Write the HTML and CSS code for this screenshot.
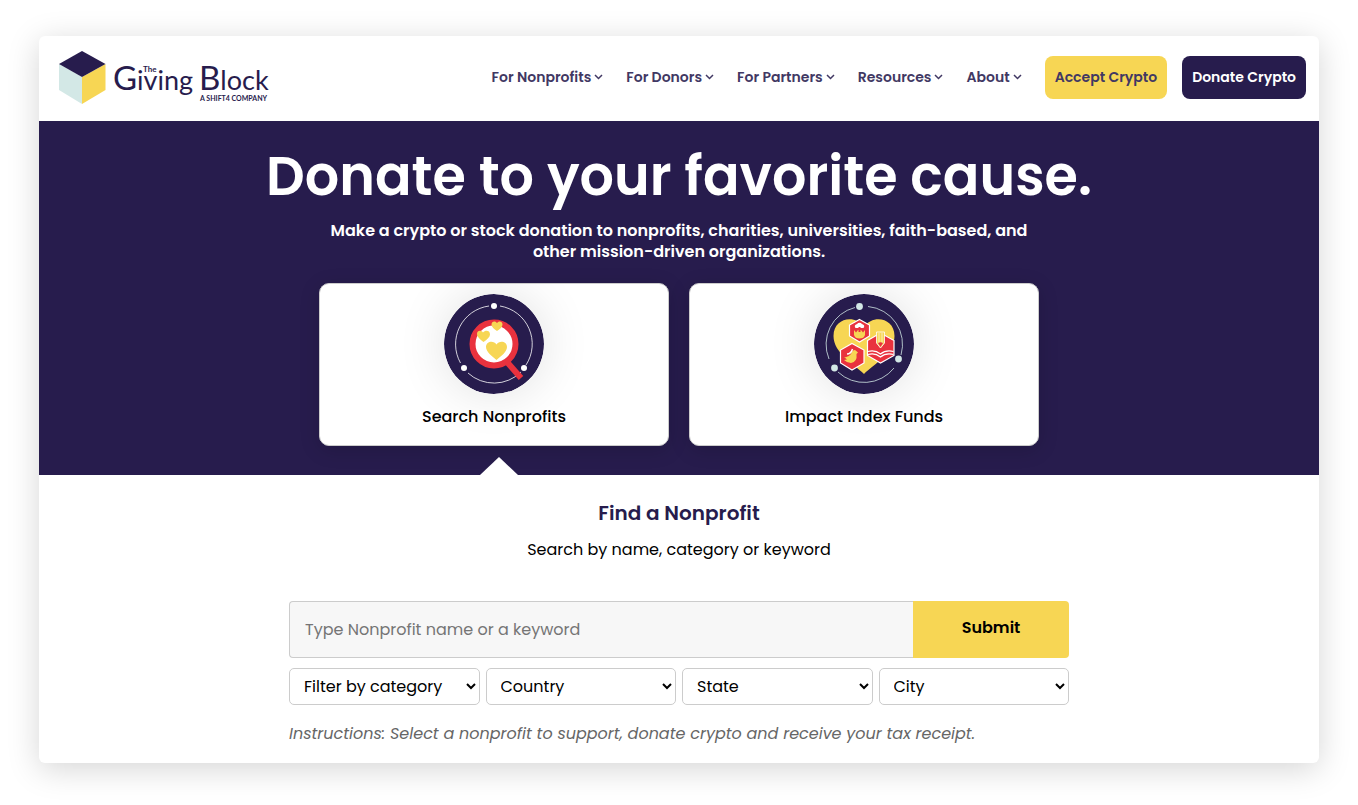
FILE: index.html
```html
<!DOCTYPE html>
<html lang="en">
<head>
    <meta charset="UTF-8">
    <meta name="viewport" content="width=device-width, initial-scale=1.0">
    <title>Donate Crypto - The Giving Block</title>
    <link rel="stylesheet" href="styles.css">
</head>
<body>

    <div class="page">
        <header class="header">
            <a class="logo" href="#" aria-label="The Giving Block">
                <svg width="220" height="56" viewBox="0 0 220 56">
                    <path d="M1 15 L24 28 V55 L1 41 Z" fill="#d3e8e6"/>
                    <path d="M47.500 15 L24 28 V55 L47.500 41 Z" fill="#f7d654"/>
                    <path d="M24 2 L47.500 15 L24 28 L1 15 Z" fill="#271c4d"/>
                    <text class="logo-name" x="55" y="41"><tspan class="logo-cap">G</tspan>iving</text>
                    <text class="logo-name" x="141" y="41"><tspan class="logo-cap">B</tspan>lock</text>
                    <text class="logo-the" x="85" y="23">The</text>
                    <text class="logo-tag" x="142" y="52">A SHIFT4 COMPANY</text>
                </svg>
            </a>
            <nav class="nav">
                <a href="#">For Nonprofits <svg class="chevron" viewBox="0 0 9 6"><path d="M1 1 L4.5 4.5 L8 1"/></svg></a>
                <a href="#">For Donors <svg class="chevron" viewBox="0 0 9 6"><path d="M1 1 L4.5 4.5 L8 1"/></svg></a>
                <a href="#">For Partners <svg class="chevron" viewBox="0 0 9 6"><path d="M1 1 L4.5 4.5 L8 1"/></svg></a>
                <a href="#">Resources <svg class="chevron" viewBox="0 0 9 6"><path d="M1 1 L4.5 4.5 L8 1"/></svg></a>
                <a href="#">About <svg class="chevron" viewBox="0 0 9 6"><path d="M1 1 L4.5 4.5 L8 1"/></svg></a>
            </nav>
            <div class="actions">
                <a class="btn btn-accept" href="#">Accept Crypto</a>
                <a class="btn btn-donate" href="#">Donate Crypto</a>
            </div>
        </header>

        <section class="hero">
            <h1>Donate to your favorite cause.</h1>
            <p class="lead">Make a crypto or stock donation to nonprofits, charities, universities, faith-based, and other mission-driven organizations.</p>
            <div class="options">
                <a class="option" href="#">
                    <svg class="option-icon" viewBox="0 0 100 100">
                        <circle cx="50" cy="50" r="50" fill="#271c4d"/>
                        <g fill="none" stroke="#fff" stroke-width="0.8">
                            <path d="M56 12 A38.5 38.5 0 0 1 82 71"/>
                            <path d="M77 78 A38.5 38.5 0 0 1 24 79"/>
                            <path d="M16.5 69 A38.5 38.5 0 0 1 45 12"/>
                        </g>
                        <g fill="#fff">
                            <circle cx="50" cy="12" r="3"/>
                            <circle cx="20" cy="74" r="3"/>
                            <circle cx="80" cy="74" r="3"/>
                        </g>
                        <path d="M63 68 L77 84" stroke="#e9323e" stroke-width="6"/>
                        <circle cx="50" cy="50" r="21.5" fill="#fff" stroke="#e9323e" stroke-width="6"/>
                        <g fill="#f7d654">
                            <path d="M52.5 66 C48 62 42 58 42 53 C42 47.5 49.5 46 52.5 50.5 C55.5 46 63 47.5 63 53 C63 58 57 62 52.5 66 Z"/>
                            <path d="M39.5 48 C36 45 33 43 33 40 C33 36 37.5 36 39 38.5 C41 36 46 36 46 40.5 C46 43 43 45.5 39.5 48 Z"/>
                            <path d="M53 37 C50 35 47.5 33 47.5 30.5 C47.5 27 51.5 26.5 53 29 C54.5 26.5 58.5 27 58.5 30.5 C58.5 33 56 35 53 37 Z"/>
                        </g>
                    </svg>
                    <span>Search Nonprofits</span>
                </a>
                <a class="option" href="#">
                    <svg class="option-icon" viewBox="0 0 100 100">
                        <circle cx="50" cy="50" r="50" fill="#271c4d"/>
                        <g fill="none" stroke="#d3e8e6" stroke-width="0.8">
                            <path d="M54 12.5 A38 38 0 0 1 87 61"/>
                            <path d="M80 74 A38 38 0 0 1 24 78"/>
                            <path d="M15 65 A38 38 0 0 1 41 13.5"/>
                        </g>
                        <g fill="#d3e8e6">
                            <circle cx="45.5" cy="12.5" r="3.4"/>
                            <circle cx="20.5" cy="74" r="3.4"/>
                            <circle cx="84.5" cy="65" r="3.4"/>
                        </g>
                        <path d="M50 80 C40 70 19.5 59 19.5 42 C19.5 24 41 20 50 33 C59 20 80.5 24 80.5 42 C80.5 59 60 70 50 80 Z" fill="#f7d654"/>
                        <g fill="#e9323e" stroke="#fff" stroke-width="1.2">
                            <path d="M45.5 25.5 L55.5 31 V42 L45.5 48 L35.5 42 V31 Z"/>
                            <path d="M38 49.5 L50 56 V69 L38 76 L26.5 69 V56 Z"/>
                            <path d="M66.5 39 L80 46.5 V61.5 L66.5 69 L53.5 61.5 V46.5 Z"/>
                        </g>
                        <path d="M40 36 L42 38.5 L44 36 H47 L49 38.5 L51 36 V41 Q50 44.5 45.5 44.5 Q41 44.500 40 41 Z" fill="#f7d654"/>
                        <path d="M41.5 34 Q39.500 31 43 30 Q45.5 27.500 48 30 Q51.500 31 49.500 34 Z" fill="#fff"/>
                        <path d="M44.500 33 H46.500 V38 H44.500 Z" fill="#e9323e"/>
                        <path d="M30 63 Q34 64 37 60 Q38 56 41 56 L44 58.500 L42.500 60 Q43.500 68 37 69 Q33 69 30 66 L33 65.500 Z" fill="#f7d654"/>
                        <path d="M33 60 Q37 60 38.500 55" fill="none" stroke="#fff" stroke-width="1.500"/>
                        <path d="M62.5 38 H70.5 V49 L66.5 54 L62.5 49 Z" fill="#f7d654" stroke="#fff" stroke-width="0.8"/>
                        <path d="M65 39 V49 M68 39 V49" stroke="#fff" stroke-width="0.6"/>
                        <path d="M64 49 Q66.5 47.500 69 49 L66.5 53 Z" fill="#e9323e"/>
                        <g fill="none" stroke="#fff" stroke-width="1.2">
                            <path d="M54 57.5 Q61 55.5 66.5 60 Q72 55.5 79.5 57.5"/>
                            <path d="M54 60.5 Q61 58.5 66.5 63 Q72 58.5 79.5 60.5"/>
                        </g>
                    </svg>
                    <span>Impact Index Funds</span>
                </a>
            </div>
            <div class="pointer"></div>
        </section>

        <main class="search">
            <h2>Find a Nonprofit</h2>
            <p class="hint">Search by name, category or keyword</p>
            <form class="search-form">
                <div class="search-row">
                    <input type="text" class="search-input" aria-label="Nonprofit name or keyword" placeholder="Type Nonprofit name or a keyword">
                    <button type="submit" class="search-submit">Submit</button>
                </div>
                <div class="filters">
                    <select aria-label="Category"><option>Filter by category</option></select>
                    <select aria-label="Country"><option>Country</option></select>
                    <select aria-label="State"><option>State</option></select>
                    <select aria-label="City"><option>City</option></select>
                </div>
                <p class="instructions">Instructions: Select a nonprofit to support, donate crypto and receive your tax receipt.</p>
            </form>
        </main>
    </div>

</body>
</html>
```
FILE: styles.css
```css
* {
    box-sizing: border-box;
}
body {
    margin: 0;
    padding: 36px 39px 42px;
    background: #fff;
    color: #000;
    font-family: Poppins, Inter, sans-serif;
    font-size: 16px;
}
a {
    color: inherit;
    text-decoration: none;
}
h1, h2, p {
    margin: 0;
}
.page {
    border-radius: 6px;
    overflow: hidden;
    background: #fff;
    box-shadow: 0 6px 32px rgba(0, 0, 0, 0.17);
}
.header {
    display: flex;
    align-items: center;
    padding: 13px 13px 16px 19px;
}
.logo svg {
    display: block;
}
.logo text {
    font-family: Lato, sans-serif;
    fill: #271c4d;
}
.logo .logo-name {
    font-size: 27px;
}
.logo .logo-cap {
    font-size: 33px;
}
.logo .logo-the {
    font-size: 8px;
    font-weight: bold;
}
.logo .logo-tag {
    font-size: 7px;
    font-weight: bold;
}
.nav {
    display: flex;
    gap: 23px;
    margin-left: auto;
    color: #413863;
    font-size: 14px;
    font-weight: 600;
}
.nav a {
    display: flex;
    align-items: center;
    gap: 3px;
}
.chevron {
    width: 9px;
    height: 6px;
    fill: none;
    stroke: currentColor;
    stroke-width: 1.5;
}
.actions {
    display: flex;
    gap: 15px;
    margin-left: 23px;
}
.btn {
    padding: 0 10px;
    border-radius: 8px;
    font-size: 14px;
    font-weight: 600;
    line-height: 43px;
}
.btn-accept {
    background: #f7d654;
    color: #413863;
}
.btn-donate {
    background: #271c4d;
    color: #fff;
}
.hero {
    padding-top: 20px;
    background: #271c4d;
    color: #fff;
    text-align: center;
}
.hero h1 {
    font-size: 54px;
    font-weight: 600;
    line-height: 70px;
}
.lead {
    max-width: 720px;
    margin: 9px auto 0;
    font-weight: 600;
    line-height: 21px;
}
.options {
    display: grid;
    grid-template-columns: 1fr 1fr;
    gap: 20px;
    max-width: 720px;
    margin: 21px auto 0;
}
.option {
    display: flex;
    flex-direction: column;
    align-items: center;
    gap: 10px;
    padding: 10px 10px 15px;
    border: 1px solid #ccc;
    border-radius: 10px;
    background: #fff;
    color: #000;
    font-weight: 500;
    line-height: 26px;
    overflow: hidden;
    box-shadow: 0 4px 20px rgba(0, 0, 0, 0.15);
}
.option-icon {
    width: 100px;
    height: 100px;
    border-radius: 50%;
    box-shadow: 0 0 50px rgba(0, 0, 0, 0.12);
}
.pointer {
    width: 38px;
    height: 18px;
    margin: 11px auto 0;
    background: #fff;
    clip-path: polygon(50% 0, 100% 100%, 0 100%);
    transform: translateX(-180px);
}
.search {
    padding: 24px 20px 16px;
    text-align: center;
}
.search h2 {
    color: #271c4d;
    font-size: 20px;
    font-weight: 600;
    line-height: 28px;
}
.hint {
    margin-top: 10px;
    line-height: 26px;
}
.search-form {
    max-width: 780px;
    margin: 38px auto 0;
}
.search-row {
    display: flex;
}
.search-input {
    flex: 1;
    height: 57px;
    padding: 0 15px;
    border: 1px solid #ccc;
    border-right: none;
    border-radius: 4px 0 0 4px;
    background: #f7f7f7;
    font: inherit;
}
.search-input::placeholder {
    color: #757575;
}
.search-submit {
    width: 20%;
    padding: 0 0 4px;
    border: none;
    border-radius: 0 4px 4px 0;
    background: #f7d654;
    color: #000;
    font: inherit;
    font-weight: 600;
    cursor: pointer;
}
.filters {
    display: grid;
    grid-template-columns: repeat(4, 1fr);
    gap: 6px;
    margin-top: 10px;
}
.filters select {
    height: 37px;
    padding: 0 0 0 10px;
    border: 1px solid #ccc;
    border-radius: 5px;
    background: #fff;
    color: #000;
    font: inherit;
}
.instructions {
    margin-top: 16px;
    color: #666;
    font-style: italic;
    line-height: 26px;
    text-align: left;
}
```
